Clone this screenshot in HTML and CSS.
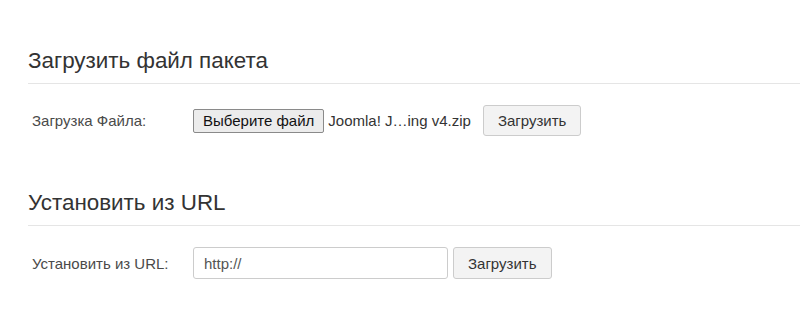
FILE: index.html
```html
<!DOCTYPE html>
<html lang="ru">
<head>
    <meta charset="UTF-8">
    <meta name="viewport" content="width=device-width, initial-scale=1.0">
    <title>Установка расширений</title>
    <link rel="stylesheet" href="styles.css">
</head>
<body>
    <fieldset class="panel">
        <legend class="panel-title">Загрузить файл пакета</legend>
        <div class="row">
            <span class="row-label">Загрузка Файла:</span>
            <div class="controls">
                <label class="file-pick">
                    <span class="file-btn">Выберите файл</span>
                    <span class="file-name">Joomla! J…ing v4.zip</span>
                </label>
                <button class="btn btn-upload">Загрузить</button>
            </div>
        </div>
    </fieldset>

    <fieldset class="panel">
        <legend class="panel-title">Установить из URL</legend>
        <div class="row">
            <label class="row-label" for="url">Установить из URL:</label>
            <div class="controls controls-tight">
                <input type="text" id="url" class="url-input" value="http://">
                <button class="btn btn-tall">Загрузить</button>
            </div>
        </div>
    </fieldset>
</body>
</html>
```

FILE: styles.css
```css
body {
    margin: 0;
    padding: 0 0 0 28px;
    font-family: "Liberation Sans", Arial, sans-serif;
    font-size: 15px;
    color: #333;
    background-color: #fff;
}

.panel {
    border: none;
    margin: 0;
    padding: 0;
    min-width: 0;
}

.panel:first-child {
    padding-top: 48px;
}

.panel + .panel {
    padding-top: 54px;
}

.panel-title {
    display: block;
    float: left;
    width: 100%;
    margin: 0;
    padding: 0 0 9px 0;
    font-size: 22.4px;
    line-height: 26px;
    font-weight: normal;
    color: #333;
    border-bottom: 1px solid #e5e5e5;
}

.row {
    clear: both;
    display: flex;
    align-items: baseline;
    padding-top: 21px;
}

.row-label {
    width: 161px;
    padding-left: 4px;
    color: #4a4a4a;
}

.controls {
    display: flex;
    align-items: baseline;
}

.file-pick {
    display: flex;
    align-items: baseline;
    cursor: pointer;
}

.file-btn {
    display: inline-block;
    height: 22px;
    line-height: 22px;
    padding: 0 9px;
    background-color: #ececec;
    border: 1px solid #8a8a8a;
    border-radius: 2px;
    color: #111;
}

.file-name {
    margin-left: 4px;
    color: #333;
}

.btn {
    height: 31px;
    padding: 0 14px;
    font-family: inherit;
    font-size: 15px;
    color: #333;
    background-color: #f3f3f3;
    border: 1px solid #ccc;
    border-radius: 3px;
    cursor: pointer;
}

.btn-upload {
    margin-left: 12px;
}

.btn-tall {
    height: 32px;
}

.controls-tight {
    gap: 5px;
}

.url-input {
    width: 255px;
    height: 32px;
    box-sizing: border-box;
    padding: 0 10px;
    font-family: inherit;
    font-size: 15px;
    color: #555;
    border: 1px solid #ccc;
    border-radius: 3px;
}
```
